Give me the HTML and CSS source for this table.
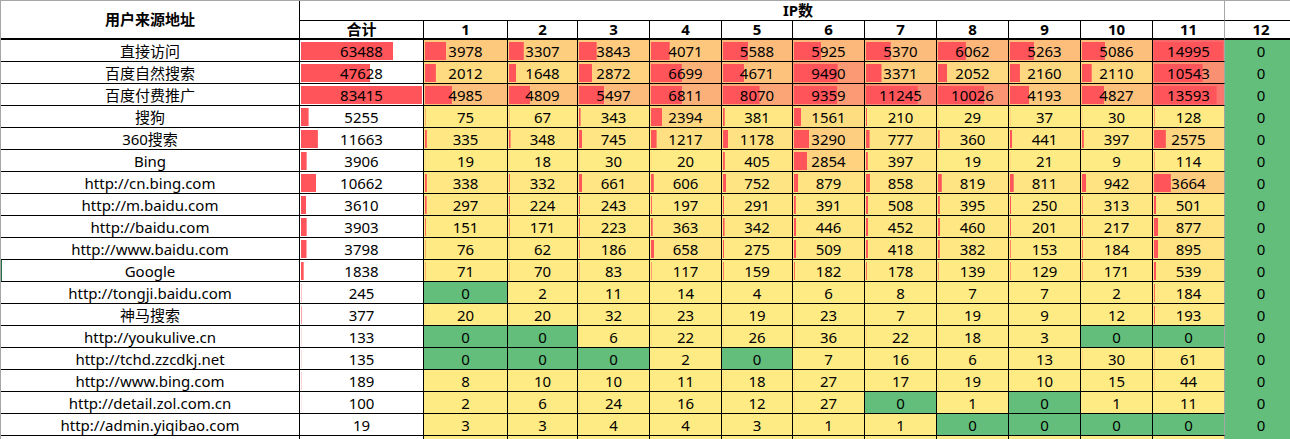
FILE: index.html
```html
<!DOCTYPE html>
<html lang="zh-CN">
<head>
<meta charset="utf-8">
<title>用户来源地址 IP数</title>
<link rel="stylesheet" href="styles.css">
</head>
<body>
<div class="sheet">
  <div class="c hd corner">用户来源地址</div>
  <div class="c hd ipsum">IP数</div>
  <div class="c top12"></div>

  <div class="c hd h2">合计</div>
  <div class="c hd h2">1</div>
  <div class="c hd h2">2</div>
  <div class="c hd h2">3</div>
  <div class="c hd h2">4</div>
  <div class="c hd h2">5</div>
  <div class="c hd h2">6</div>
  <div class="c hd h2">7</div>
  <div class="c hd h2">8</div>
  <div class="c hd h2">9</div>
  <div class="c hd h2">10</div>
  <div class="c hd h2 last">11</div>
  <div class="c hd h2 h12">12</div>

  <div class="c name">直接访问</div><div class="c tot bar">63488</div>
  <div class="c ip bar">3978</div><div class="c ip bar">3307</div><div class="c ip bar">3843</div><div class="c ip bar">4071</div><div class="c ip bar">5588</div><div class="c ip bar">5925</div><div class="c ip bar">5370</div><div class="c ip bar">6062</div><div class="c ip bar">5263</div><div class="c ip bar">5086</div><div class="c ip bar last">14995</div><div class="c z12">0</div>

  <div class="c name">百度自然搜索</div><div class="c tot bar">47628</div>
  <div class="c ip bar">2012</div><div class="c ip bar">1648</div><div class="c ip bar">2872</div><div class="c ip bar">6699</div><div class="c ip bar">4671</div><div class="c ip bar">9490</div><div class="c ip bar">3371</div><div class="c ip bar">2052</div><div class="c ip bar">2160</div><div class="c ip bar">2110</div><div class="c ip bar last">10543</div><div class="c z12">0</div>

  <div class="c name">百度付费推广</div><div class="c tot bar">83415</div>
  <div class="c ip bar">4985</div><div class="c ip bar">4809</div><div class="c ip bar">5497</div><div class="c ip bar">6811</div><div class="c ip bar">8070</div><div class="c ip bar">9359</div><div class="c ip bar">11245</div><div class="c ip bar">10026</div><div class="c ip bar">4193</div><div class="c ip bar">4827</div><div class="c ip bar last">13593</div><div class="c z12">0</div>

  <div class="c name">搜狗</div><div class="c tot bar">5255</div>
  <div class="c ip bar">75</div><div class="c ip bar">67</div><div class="c ip bar">343</div><div class="c ip bar">2394</div><div class="c ip bar">381</div><div class="c ip bar">1561</div><div class="c ip bar">210</div><div class="c ip bar">29</div><div class="c ip bar">37</div><div class="c ip bar">30</div><div class="c ip bar last">128</div><div class="c z12">0</div>

  <div class="c name">360搜索</div><div class="c tot bar">11663</div>
  <div class="c ip bar">335</div><div class="c ip bar">348</div><div class="c ip bar">745</div><div class="c ip bar">1217</div><div class="c ip bar">1178</div><div class="c ip bar">3290</div><div class="c ip bar">777</div><div class="c ip bar">360</div><div class="c ip bar">441</div><div class="c ip bar">397</div><div class="c ip bar last">2575</div><div class="c z12">0</div>

  <div class="c name">Bing</div><div class="c tot bar">3906</div>
  <div class="c ip bar">19</div><div class="c ip bar">18</div><div class="c ip bar">30</div><div class="c ip bar">20</div><div class="c ip bar">405</div><div class="c ip bar">2854</div><div class="c ip bar">397</div><div class="c ip bar">19</div><div class="c ip bar">21</div><div class="c ip bar">9</div><div class="c ip bar last">114</div><div class="c z12">0</div>

  <div class="c name">http://cn.bing.com</div><div class="c tot bar">10662</div>
  <div class="c ip bar">338</div><div class="c ip bar">332</div><div class="c ip bar">661</div><div class="c ip bar">606</div><div class="c ip bar">752</div><div class="c ip bar">879</div><div class="c ip bar">858</div><div class="c ip bar">819</div><div class="c ip bar">811</div><div class="c ip bar">942</div><div class="c ip bar last">3664</div><div class="c z12">0</div>

  <div class="c name">http://m.baidu.com</div><div class="c tot bar">3610</div>
  <div class="c ip bar">297</div><div class="c ip bar">224</div><div class="c ip bar">243</div><div class="c ip bar">197</div><div class="c ip bar">291</div><div class="c ip bar">391</div><div class="c ip bar">508</div><div class="c ip bar">395</div><div class="c ip bar">250</div><div class="c ip bar">313</div><div class="c ip bar last">501</div><div class="c z12">0</div>

  <div class="c name">http://baidu.com</div><div class="c tot bar">3903</div>
  <div class="c ip bar">151</div><div class="c ip bar">171</div><div class="c ip bar">223</div><div class="c ip bar">363</div><div class="c ip bar">342</div><div class="c ip bar">446</div><div class="c ip bar">452</div><div class="c ip bar">460</div><div class="c ip bar">201</div><div class="c ip bar">217</div><div class="c ip bar last">877</div><div class="c z12">0</div>

  <div class="c name">http://www.baidu.com</div><div class="c tot bar">3798</div>
  <div class="c ip bar">76</div><div class="c ip bar">62</div><div class="c ip bar">186</div><div class="c ip bar">658</div><div class="c ip bar">275</div><div class="c ip bar">509</div><div class="c ip bar">418</div><div class="c ip bar">382</div><div class="c ip bar">153</div><div class="c ip bar">184</div><div class="c ip bar last">895</div><div class="c z12">0</div>

  <div class="c name sel">Google</div><div class="c tot bar">1838</div>
  <div class="c ip bar">71</div><div class="c ip bar">70</div><div class="c ip bar">83</div><div class="c ip bar">117</div><div class="c ip bar">159</div><div class="c ip bar">182</div><div class="c ip bar">178</div><div class="c ip bar">139</div><div class="c ip bar">129</div><div class="c ip bar">171</div><div class="c ip bar last">539</div><div class="c z12">0</div>

  <div class="c name">http://tongji.baidu.com</div><div class="c tot bar">245</div>
  <div class="c ip bar">0</div><div class="c ip bar">2</div><div class="c ip bar">11</div><div class="c ip bar">14</div><div class="c ip bar">4</div><div class="c ip bar">6</div><div class="c ip bar">8</div><div class="c ip bar">7</div><div class="c ip bar">7</div><div class="c ip bar">2</div><div class="c ip bar last">184</div><div class="c z12">0</div>

  <div class="c name">神马搜索</div><div class="c tot bar">377</div>
  <div class="c ip bar">20</div><div class="c ip bar">20</div><div class="c ip bar">32</div><div class="c ip bar">23</div><div class="c ip bar">19</div><div class="c ip bar">23</div><div class="c ip bar">7</div><div class="c ip bar">19</div><div class="c ip bar">9</div><div class="c ip bar">12</div><div class="c ip bar last">193</div><div class="c z12">0</div>

  <div class="c name">http://youkulive.cn</div><div class="c tot bar">133</div>
  <div class="c ip bar">0</div><div class="c ip bar">0</div><div class="c ip bar">6</div><div class="c ip bar">22</div><div class="c ip bar">26</div><div class="c ip bar">36</div><div class="c ip bar">22</div><div class="c ip bar">18</div><div class="c ip bar">3</div><div class="c ip bar">0</div><div class="c ip bar last">0</div><div class="c z12">0</div>

  <div class="c name">http://tchd.zzcdkj.net</div><div class="c tot bar">135</div>
  <div class="c ip bar">0</div><div class="c ip bar">0</div><div class="c ip bar">0</div><div class="c ip bar">2</div><div class="c ip bar">0</div><div class="c ip bar">7</div><div class="c ip bar">16</div><div class="c ip bar">6</div><div class="c ip bar">13</div><div class="c ip bar">30</div><div class="c ip bar last">61</div><div class="c z12">0</div>

  <div class="c name">http://www.bing.com</div><div class="c tot bar">189</div>
  <div class="c ip bar">8</div><div class="c ip bar">10</div><div class="c ip bar">10</div><div class="c ip bar">11</div><div class="c ip bar">18</div><div class="c ip bar">27</div><div class="c ip bar">17</div><div class="c ip bar">19</div><div class="c ip bar">10</div><div class="c ip bar">15</div><div class="c ip bar last">44</div><div class="c z12">0</div>

  <div class="c name">http://detail.zol.com.cn</div><div class="c tot bar">100</div>
  <div class="c ip bar">2</div><div class="c ip bar">6</div><div class="c ip bar">24</div><div class="c ip bar">16</div><div class="c ip bar">12</div><div class="c ip bar">27</div><div class="c ip bar">0</div><div class="c ip bar">1</div><div class="c ip bar">0</div><div class="c ip bar">1</div><div class="c ip bar last">11</div><div class="c z12">0</div>

  <div class="c name">http://admin.yiqibao.com</div><div class="c tot bar">19</div>
  <div class="c ip bar">3</div><div class="c ip bar">3</div><div class="c ip bar">4</div><div class="c ip bar">4</div><div class="c ip bar">3</div><div class="c ip bar">1</div><div class="c ip bar">1</div><div class="c ip bar">0</div><div class="c ip bar">0</div><div class="c ip bar">0</div><div class="c ip bar last">0</div><div class="c z12">0</div>

  <div class="c name"></div><div class="c tot"></div>
  <div class="c fill"></div><div class="c fill"></div><div class="c fill"></div><div class="c fill"></div><div class="c fill"></div><div class="c fill"></div><div class="c fill"></div><div class="c fill"></div><div class="c fill"></div><div class="c fill"></div><div class="c fill last"></div><div class="c z12"></div>
</div>
<script src="script.js"></script>
</body>
</html>
```

FILE: styles.css
```css
html, body {
  margin: 0;
  padding: 0;
  overflow: hidden;
  background: #ffffff;
}

body {
  font-family: "Noto Sans", "Noto Sans CJK SC", sans-serif;
  font-size: 15px;
  color: #000000;
}

.sheet {
  display: grid;
  grid-template-columns: 299px 124px 84px 70px 72px 72px 71px 72px 72px 72px 72px 72px 72px 72px;
  grid-template-rows: 20px 19px;
  grid-auto-rows: 22px;
  width: max-content;
  border-top: 1px solid #a6a6a6;
  border-left: 1px solid #a6a6a6;
}

.c {
  box-sizing: border-box;
  display: flex;
  align-items: center;
  justify-content: center;
  border-right: 1px solid #000000;
  border-bottom: 1px solid #000000;
  white-space: nowrap;
  line-height: 1;
  padding-top: 1px;
}

.hd {
  font-weight: 700;
}

.corner {
  grid-row: span 2;
  border-bottom-width: 2px;
  padding-top: 0;
}

.ipsum {
  grid-column: span 12;
  padding-left: 72px;
  padding-top: 0;
  border-right-color: #a6a6a6;
}

.top12 {
  border-right: none;
}

.h2 {
  border-bottom-width: 2px;
  padding-top: 0;
}

.last {
  border-right-color: #a6a6a6;
}

.h12 {
  border-right: none;
}

.name.sel {
  box-shadow: inset 1px 0 0 #217346;
}

.bar {
  background-image: linear-gradient(#ff555a, #ff555a);
  background-repeat: no-repeat;
  background-position: 1px 2px;
  background-size: calc((100% - 2px) * var(--r, 0)) calc(100% - 3px);
}

.ip, .fill {
  background-color: #ffeb84;
}

.ip.zero {
  background-color: #63be7b;
  background-image: none;
}

.z12 {
  border: none;
  background-color: #63be7b;
}
```

FILE: script.js
```js
(function () {
  var tots = Array.prototype.slice.call(document.querySelectorAll('.tot.bar'));
  var maxT = Math.max.apply(null, tots.map(function (e) { return +e.textContent; }));
  tots.forEach(function (e) {
    e.style.setProperty('--r', (+e.textContent / maxT).toFixed(5));
  });

  var ips = Array.prototype.slice.call(document.querySelectorAll('.ip'));
  var maxI = Math.max.apply(null, ips.map(function (e) { return +e.textContent; }));
  ips.forEach(function (e) {
    var v = +e.textContent;
    if (v === 0) { e.classList.add('zero'); return; }
    var t = v / maxI;
    e.style.setProperty('--r', t.toFixed(5));
    var mix = function (a, b) { return Math.round(a + (b - a) * t); };
    e.style.backgroundColor = 'rgb(' + mix(255, 248) + ',' + mix(235, 105) + ',' + mix(132, 107) + ')';
  });
})();
```
